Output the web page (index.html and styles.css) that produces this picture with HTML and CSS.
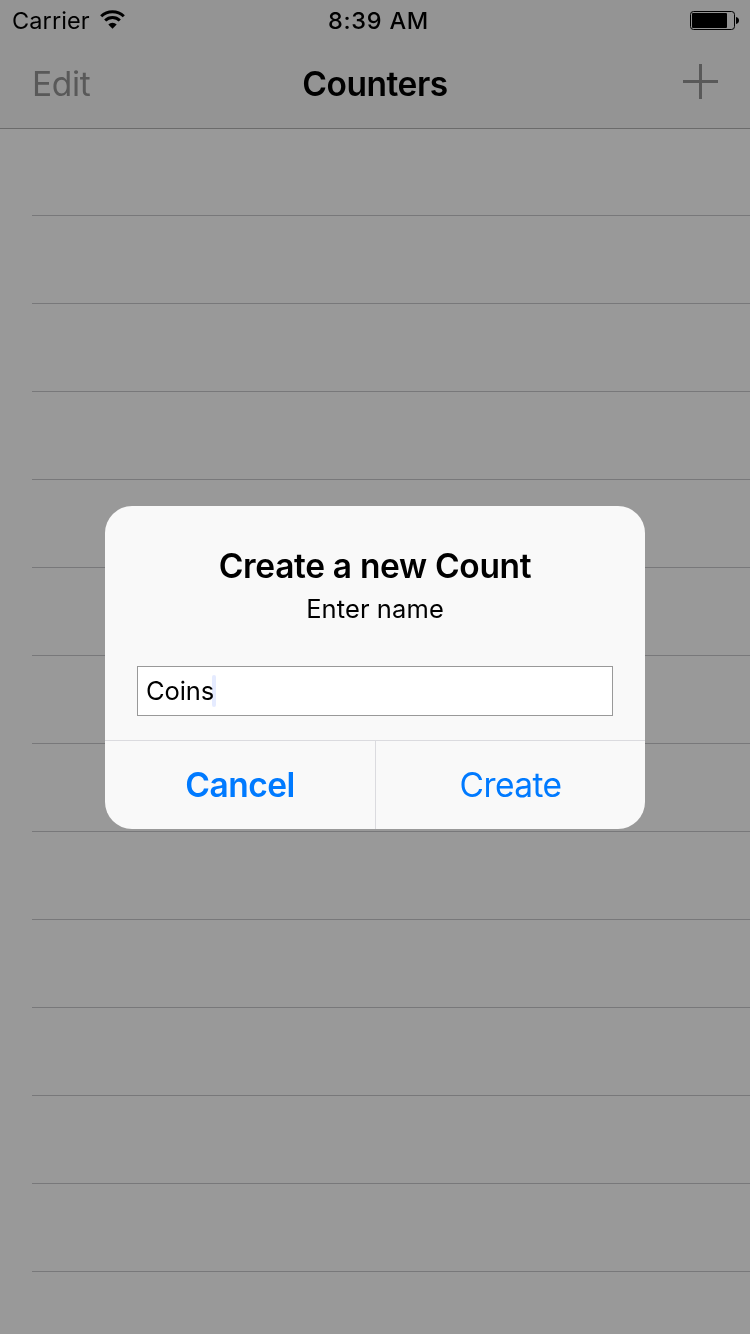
FILE: index.html
```html
<!DOCTYPE html>
<html lang="en">
<head>
<meta charset="utf-8">
<title>Counters</title>
<link rel="stylesheet" href="styles.css">
</head>
<body>
<div class="screen">
  <header class="top">
    <div class="status">
      <div class="status-left">
        <span class="carrier">Carrier</span>
        <svg class="wifi" width="25" height="19" viewBox="0 0 25 19">
          <path d="M1.200 6.300A16.200 16.200 0 0 1 23.800 6.300" fill="none" stroke="#000" stroke-width="3"/>
          <path d="M5.200 10.500A10.400 10.400 0 0 1 19.800 10.500" fill="none" stroke="#000" stroke-width="3"/>
          <path d="M8.300 14.500A6 6 0 0 1 16.700 14.500L12.500 18.800Z" fill="#000"/>
        </svg>
      </div>
      <span class="time">8:39 AM</span>
      <div class="status-right">
        <svg width="49" height="19" viewBox="0 0 49 19">
          <rect x=".5" y=".5" width="44" height="18" rx="3" fill="none" stroke="#000"/>
          <rect x="2" y="2" width="35" height="15" rx="1" fill="#000"/>
          <path d="M46 6C50 6.500 50 12.500 46 13Z" fill="#000"/>
        </svg>
      </div>
    </div>
    <nav class="nav">
      <span class="edit">Edit</span>
      <h1 class="title">Counters</h1>
      <svg class="add" width="35" height="35" viewBox="0 0 35 35"><path d="M0 16H16V0H19V16H35V19H19V35H16V19H0Z" fill="#595959"/></svg>
    </nav>
  </header>
  <div class="rows">
    <div class="row"></div><div class="row"></div><div class="row"></div><div class="row"></div>
    <div class="row"></div><div class="row"></div><div class="row"></div><div class="row"></div>
    <div class="row"></div><div class="row"></div><div class="row"></div><div class="row"></div>
    <div class="row"></div>
  </div>
  <div class="overlay">
    <section class="alert">
      <div class="alert-body">
        <h2 class="alert-title">Create a new Count</h2>
        <p class="alert-message">Enter name</p>
        <div class="field"><span class="field-text">Coins</span><i class="caret"></i></div>
      </div>
      <div class="actions">
        <div class="action cancel">Cancel</div>
        <div class="action create">Create</div>
      </div>
    </section>
  </div>
</div>
</body>
</html>
```
FILE: styles.css
```css
* { box-sizing: border-box; }
body { margin: 0; font-family: Inter, "Liberation Sans", sans-serif; color: #000; }
.screen { position: relative; width: 750px; height: 1334px; overflow: hidden; background: #999; }
.top { height: 128px; background: #949494; box-shadow: 0 1px 0 #6b6b6b; }
.status { display: grid; grid-template-columns: 1fr auto 1fr; height: 40px; line-height: 42px; }
.status-left { display: flex; align-items: flex-start; padding-left: 12px; }
.carrier { width: 88px; font-size: 23.5px; letter-spacing: .1px; }
.wifi { margin-top: 10px; }
.time { font-size: 23.5px; font-weight: 500; letter-spacing: .75px; padding-left: 7px; }
.status-right { display: flex; justify-content: flex-end; padding: 11px 11px 0 0; }
.nav { display: grid; grid-template-columns: 1fr auto 1fr; height: 88px; line-height: 89px; }
.edit { padding-left: 32px; font-size: 33.5px; color: #595959; letter-spacing: -.3px; }
.title { margin: 0; font-size: 33.5px; font-weight: 600; letter-spacing: -.48px; }
.add { justify-self: end; margin: 24px 32px 0 0; }
.row { height: 88px; margin-left: 32px; border-bottom: 1px solid #78787a; }
.overlay { position: absolute; inset: 0; display: flex; align-items: flex-start; justify-content: center; padding-top: 506px; }
.alert { width: 540px; height: 323px; border-radius: 27px; background: #f9f9f9; overflow: hidden; }
.alert-body { height: 235px; padding: 40px 32px 0; border-bottom: 1px solid #dbdbdf; text-align: center; }
.alert-title { margin: 0; height: 40px; line-height: 41px; font-size: 33.5px; font-weight: 600; letter-spacing: -.32px; white-space: nowrap; }
.alert-message { margin: 7px 0 41px; height: 32px; line-height: 31px; font-size: 25.5px; letter-spacing: .1px; }
.field { display: flex; align-items: center; height: 50px; padding-left: 8px; border: 1px solid #999; background: #fff; font-size: 25.5px; }
.field-text { width: 66px; line-height: 32px; letter-spacing: -.1px; text-align: left; white-space: nowrap; padding-bottom: 1px; }
.caret { width: 4px; height: 32px; border-radius: 2px; background: #e5ebff; mix-blend-mode: multiply; }
.actions { display: grid; grid-template-columns: 271px 1fr; height: 88px; line-height: 89px; text-align: center; font-size: 33.5px; color: #007aff; }
.cancel { border-right: 1px solid #dbdbdf; font-weight: 600; letter-spacing: -.5px; }
.create { letter-spacing: -.6px; }
```
